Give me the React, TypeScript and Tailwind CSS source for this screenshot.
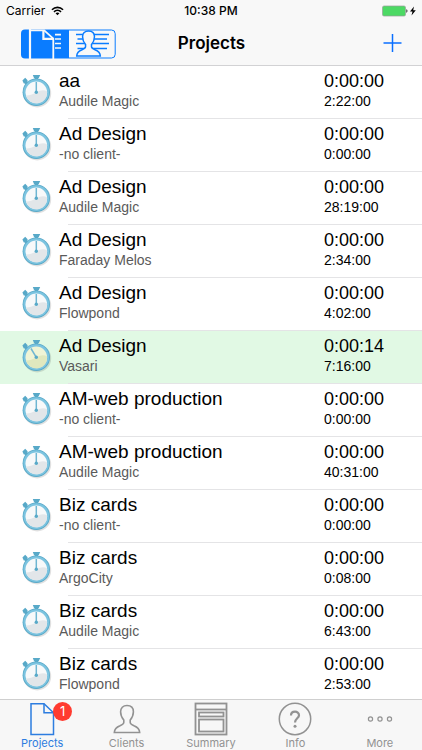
import { useState } from 'react';
import type { ReactNode } from 'react';

type Project = {
  name: string;
  client: string;
  current: string;
  total: string;
  running?: boolean;
};

const projects: Project[] = [
  { name: 'aa', client: 'Audile Magic', current: '0:00:00', total: '2:22:00' },
  { name: 'Ad Design', client: '-no client-', current: '0:00:00', total: '0:00:00' },
  { name: 'Ad Design', client: 'Audile Magic', current: '0:00:00', total: '28:19:00' },
  { name: 'Ad Design', client: 'Faraday Melos', current: '0:00:00', total: '2:34:00' },
  { name: 'Ad Design', client: 'Flowpond', current: '0:00:00', total: '4:02:00' },
  { name: 'Ad Design', client: 'Vasari', current: '0:00:14', total: '7:16:00', running: true },
  { name: 'AM-web production', client: '-no client-', current: '0:00:00', total: '0:00:00' },
  { name: 'AM-web production', client: 'Audile Magic', current: '0:00:00', total: '40:31:00' },
  { name: 'Biz cards', client: '-no client-', current: '0:00:00', total: '0:00:00' },
  { name: 'Biz cards', client: 'ArgoCity', current: '0:00:00', total: '0:08:00' },
  { name: 'Biz cards', client: 'Audile Magic', current: '0:00:00', total: '6:43:00' },
  { name: 'Biz cards', client: 'Flowpond', current: '0:00:00', total: '2:53:00' },
];

const personPath =
  'M14 1.5C10 1.5 7.6 4 7.6 7.8C7.6 11.2 9 14 10.8 16V18.6C10.8 20 9.3 20.8 7 21.8C3.5 23.2 1.5 24.5 1.3 28.5H26.7C26.5 24.5 24.5 23.2 21 21.8C18.7 20.8 17.2 20 17.2 18.6V16C19 14 20.4 11.2 20.4 7.8C20.4 4 18 1.5 14 1.5Z';

function StatusBar() {
  return (
    <div className="grid grid-cols-3 items-center h-[22px] px-[6px] text-[12px] text-black">
      <div className="flex items-center gap-[6px]">
        <span>Carrier</span>
        <svg width="13" height="10" viewBox="0 0 14 10" fill="none" stroke="#000" strokeWidth="1.7">
          <path d="M1 3.6C4.4 0.3 9.6 0.3 13 3.6" />
          <path d="M3.2 5.9C5.4 3.8 8.6 3.8 10.8 5.9" />
          <path d="M7 9.6L4.9 7.5C6.1 6.4 7.9 6.4 9.1 7.5Z" fill="#000" stroke="none" />
        </svg>
      </div>
      <span className="text-center font-medium">10:38 PM</span>
      <svg className="justify-self-end" width="34" height="12" viewBox="0 0 34 12">
        <rect x="0.5" y="1" width="23" height="10" rx="1.5" fill="#4cd964" stroke="#9a9f9a" strokeWidth="0.7" />
        <path d="M24.3 4.3C25.8 4.3 25.8 7.7 24.3 7.7Z" fill="#333" />
        <path d="M32 1.5L28 6.5H30.5L29.5 10.5L33.8 5.2H31.2Z" fill="#000" />
      </svg>
    </div>
  );
}

function Header({ view, onChange }: { view: string; onChange: (view: string) => void }) {
  return (
    <header className="shrink-0 bg-[#f8f8f8] border-b border-[#d2d2d4]">
      <StatusBar />
      <div className="grid grid-cols-[1fr_auto_1fr] items-center h-[43px] pl-[21px] pr-5">
        <div className="flex">
          <button aria-label="Projects view" aria-pressed={view === 'projects'} onClick={() => onChange('projects')}>
            <svg className="block" width="48" height="30" viewBox="0 0 48 30" fill="none">
              <path d="M4 0.5H48V29.5H4Q0 29.5 0 25.5V4.5Q0 0.5 4 0.5Z" fill="#0a7cff" />
              <path d="M9 0V30" stroke="#f8f8f8" strokeWidth="2.2" />
              <path d="M9 1.4H23.2L32.3 9.6V30" stroke="#f8f8f8" strokeWidth="1.8" />
              <path d="M22.4 1V9.8H32.6" stroke="#f8f8f8" strokeWidth="2.2" />
              <path d="M34 5.6H40M34 10H40M34 14.5H40M34 19H40" stroke="#f8f8f8" strokeWidth="1.6" />
            </svg>
          </button>
          <button aria-label="Clients view" aria-pressed={view === 'clients'} onClick={() => onChange('clients')}>
            <svg className="block" width="47" height="30" viewBox="0 0 47 30" fill="none" stroke="#0a7cff">
              <path d="M0 1H42.5Q46.2 1 46.2 4.7V25.3Q46.2 29 42.5 29H0" />
              <path d="M7 5.5H40M8.5 10H38M7 14.5H40M8.5 19.5H38" strokeWidth="1.7" />
              <path transform="translate(6.5 0.5) scale(0.93)" d={personPath} fill="#f8f8f8" strokeWidth="1.6" />
            </svg>
          </button>
        </div>
        <h1 className="text-[17px] font-semibold text-black">Projects</h1>
        <button aria-label="Add project" className="justify-self-end">
          <svg className="block" width="19" height="22" viewBox="0 0 19 22" stroke="#0a6fff" strokeWidth="1.5">
            <path d="M9.5 1V19M0.5 10H18.5" />
          </svg>
        </button>
      </div>
    </header>
  );
}

function Stopwatch({ running }: { running?: boolean }) {
  return (
    <svg className="shrink-0" width="32" height="36" viewBox="0 0 32 36">
      <circle cx="17.2" cy="20.4" r="14" fill="#000" opacity="0.12" />
      <path d="M12.8 2H20.2L18.8 5H18.2V8H14.6V5H14Z" fill="#58a9c8" />
      <path d="M2.4 7.4L5.2 4.8L7.6 7.2L7.4 8.4L10 11L7.4 13.4L4.8 10.6L3.8 10.4Z" fill="#58a9c8" />
      <circle cx="16.3" cy="19.3" r="13.7" fill="#58a9c8" />
      <circle cx="16.3" cy="19.1" r="12.9" fill="#7cc4e0" />
      <circle cx="16.3" cy="19.3" r="10.8" fill={running ? '#eff4d6' : '#f7f9fa'} />
      <path
        d="M5.9 22.4A10.8 10.8 0 0 0 27.1 18.6Q23 15.6 16.3 19.3T5.9 22.4Z"
        fill={running ? '#e0e8be' : '#e2e6e9'}
      />
      <path d={running ? 'M11 10.5L16.3 19.3' : 'M16.3 9V19.3'} stroke="#6fb6d2" strokeWidth="1.5" />
      <circle cx="16.3" cy="19.3" r="1.7" fill="#58a9c8" />
    </svg>
  );
}

function ProjectRow({ project }: { project: Project }) {
  return (
    <li className={project.running ? 'bg-[#e1f9e4]' : 'bg-white'}>
      <div className="flex h-[52px] pl-5 font-[Liberation_Sans,Arial,sans-serif]">
        <div className="pt-[7px]">
          <Stopwatch running={project.running} />
        </div>
        <div className="flex-1 pl-[7px] pt-1">
          <p className="text-[19px] leading-[22px] text-black">{project.name}</p>
          <p className="text-[14px] leading-[18px] text-[#5a5a5a]">{project.client}</p>
        </div>
        <div className="w-[98px] pt-1 text-black">
          <p className="text-[18px] leading-[22px]">{project.current}</p>
          <p className="text-[14px] leading-[18px]">{project.total}</p>
        </div>
      </div>
      <div className="ml-[68px] border-b border-[#e4e4e6]" />
    </li>
  );
}

function Tab({ label, active, badge, children }: { label: string; active?: boolean; badge?: number; children: ReactNode }) {
  return (
    <a
      href="#"
      aria-current={active ? 'page' : undefined}
      className={
        active
          ? 'flex flex-1 flex-col items-center pt-[2px] text-[#2d7de0]'
          : 'flex flex-1 flex-col items-center pt-[2px] text-[#929292]'
      }
    >
      <span className="relative">
        <svg className="block" width="34" height="34" viewBox="0 0 34 34" fill="none" stroke="currentColor">
          {children}
        </svg>
        {badge && (
          <span className="absolute left-7 top-0 flex size-[19px] items-center justify-center rounded-full bg-[#ff3b30] text-[13px] text-white">
            {badge}
          </span>
        )}
      </span>
      <span className="text-[11px] leading-[14px]">{label}</span>
    </a>
  );
}

function TabBar() {
  return (
    <nav className="flex shrink-0 h-[51px] border-t border-[#cfcfcf] bg-[#f7f7f7]">
      <Tab label="Projects" active badge={1}>
        <path d="M6 1.7H19L28.5 10.8V32.5H6Z" strokeWidth="1.5" />
        <path d="M19 1.7V10.8H28.5" strokeWidth="1.5" />
      </Tab>
      <Tab label="Clients">
        <path transform="translate(3 2)" d={personPath} strokeWidth="1.6" />
      </Tab>
      <Tab label="Summary">
        <g strokeWidth="1.8">
          <rect x="1.5" y="1.5" width="31" height="31" />
          <path d="M1.5 7.5H32.5" />
          <rect x="5" y="10.5" width="24.5" height="4" />
          <rect x="5" y="17.5" width="24.5" height="12" />
        </g>
      </Tab>
      <Tab label="Info">
        <circle cx="17" cy="17" r="15.7" strokeWidth="1.5" />
        <path d="M13 13.5C13 8.5 21 8.5 21 13.2C21 16.2 17 16.4 17 20.5" strokeWidth="2.2" />
        <circle cx="17" cy="24.2" r="1.5" fill="currentColor" stroke="none" />
      </Tab>
      <Tab label="More">
        <g strokeWidth="1.2">
          <circle cx="7.5" cy="17" r="2.1" />
          <circle cx="17" cy="17" r="2.1" />
          <circle cx="26.5" cy="17" r="2.1" />
        </g>
      </Tab>
    </nav>
  );
}

export default function App() {
  const [view, setView] = useState('projects');

  return (
    <div className="flex h-screen flex-col bg-white font-[Inter,sans-serif]">
      <Header view={view} onChange={setView} />
      <main className="flex-1 overflow-y-auto [scrollbar-width:none]">
        <ul>
          {projects.map((project, index) => (
            <ProjectRow key={index} project={project} />
          ))}
        </ul>
      </main>
      <TabBar />
    </div>
  );
}
